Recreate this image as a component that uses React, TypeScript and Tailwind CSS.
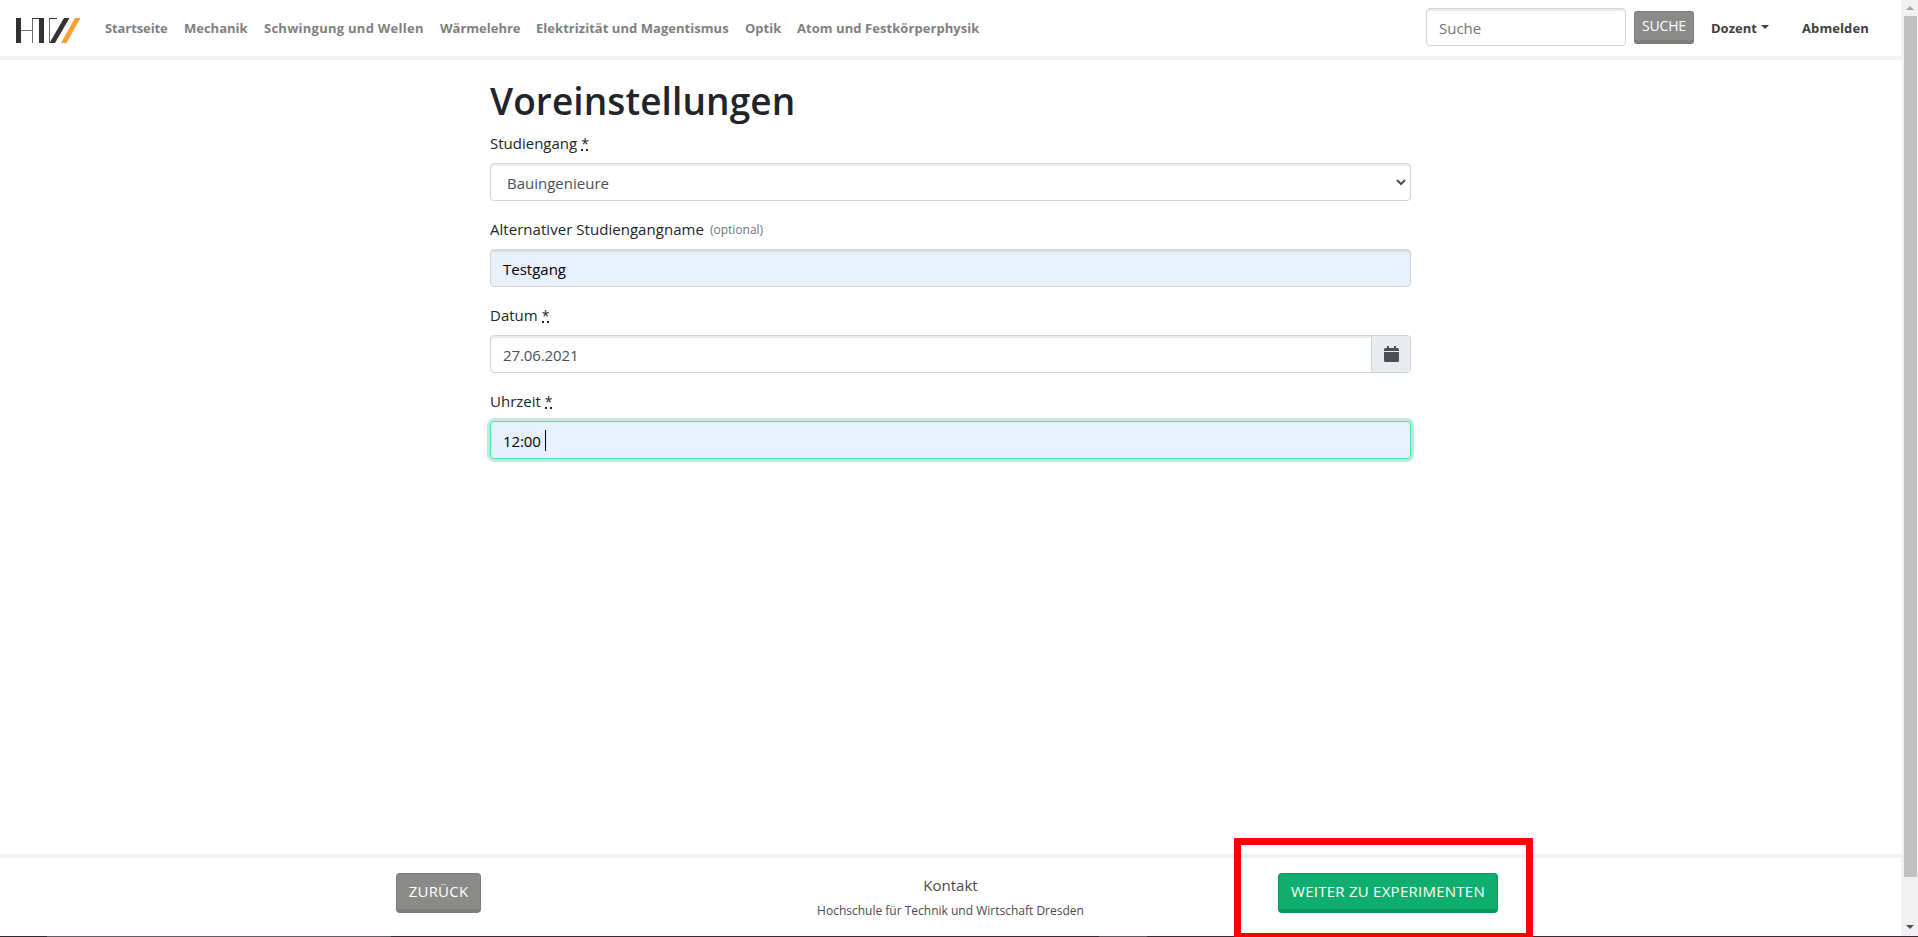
import React from "react";

const nav = [
  { label: "Startseite", cls: "w-[63px] mr-4 tracking-[-0.1px]" },
  { label: "Mechanik", cls: "w-[64px] mr-4" },
  { label: "Schwingung und Wellen", cls: "w-[160px] mr-4 tracking-[0.26px]" },
  { label: "Wärmelehre", cls: "w-[80px] mr-4" },
  { label: "Elektrizität und Magentismus", cls: "w-[193px] mr-4 tracking-[0.04px]" },
  { label: "Optik", cls: "w-[36px] mr-4" },
  { label: "Atom und Festkörperphysik", cls: "w-[183px] tracking-[0.06px]" },
];

function Logo() {
  return (
    <svg width="65" height="25" viewBox="0 0 65 25" className="block shrink-0">
      <g fill="#333132">
        <rect x="0" y="0" width="5" height="25" />
        <rect x="5" y="12" width="11" height="1" opacity=".7" />
        <rect x="16" y="0" width="1" height="25" opacity=".7" />
        <rect x="16" y="0" width="12" height="1" />
        <rect x="23" y="0" width="5" height="25" />
        <rect x="33" y="0" width="8" height="1" />
        <rect x="33" y="0" width="1" height="25" opacity=".7" />
        <path d="M48 0H53.5L39 25H33.5Z" />
      </g>
      <path d="M59 0H64.5L50.5 25H45Z" fill="#f9a030" />
    </svg>
  );
}

function Label({ text, required, optional }: { text: string; required?: boolean; optional?: boolean }) {
  return (
    <label className="-mt-px mb-px flex h-6 items-center whitespace-nowrap text-[15px] leading-6 text-[#212529]">
      <span className={optional ? "tracking-[0.04px]" : ""}>{text}</span>
      {required && (
        <span className="-mt-px ml-1 h-[17px] w-[7px] border-b-2 border-dotted border-[#212529] text-center text-[14px] leading-[20px]">*</span>
      )}
      {optional && <span className="mt-[2px] ml-[6px] text-[12px] text-[#6c757d]">(optional)</span>}
    </label>
  );
}

const field = "flex h-[38px] w-full items-center rounded border border-[#ced4da] text-[15px] whitespace-pre";

export default function App() {
  return (
    <div className="relative flex h-[937px] w-[1918px] flex-col overflow-hidden bg-white font-['Open_Sans','Noto_Sans',sans-serif]">
      <div className="flex h-[936px]">
        <div className="flex w-[1902px] flex-col">
          <header className="flex h-[60px] shrink-0 border-b-4 border-[#f1f1f1]">
            <div className="flex h-14 w-full items-center border-r border-[#f1f1f1] pl-4">
              <div className="mt-[5px]"><Logo /></div>
              <nav className="mt-[2px] ml-6 flex text-[13px] font-bold text-[#7f7f7f]">
                {nav.map((n) => (
                  <a key={n.label} className={`block whitespace-nowrap ${n.cls}`}>{n.label}</a>
                ))}
              </nav>
              <div className="ml-auto flex items-center">
                <div className="mt-[-2px] flex h-[38px] w-[200px] items-center rounded border border-[#ced4da] pt-[2px] pl-3 text-[15px] text-[#6c757d] shadow-[inset_0_2px_0_#ebebeb]">Suche</div>
                <button className="mt-[-2px] ml-2 flex h-[33px] w-[60px] justify-center rounded-[3px] border border-b-4 border-[#7d7d7b] bg-[#8a8a88] text-[14px] leading-[27px] tracking-[-0.2px] text-white">SUCHE</button>
                <span className="mt-[2px] ml-[17px] w-[47px] text-[13px] font-bold text-[#404040]">Dozent</span>
                <span className="-mt-[2px] ml-[3px] h-0 w-0 border-x-4 border-t-4 border-x-transparent border-t-[#404040]" />
                <span className="mt-[2px] mr-[31px] ml-[33px] w-[68px] text-[13px] font-bold tracking-[0.1px] text-[#404040]">Abmelden</span>
              </div>
            </div>
          </header>

          <main className="flex grow flex-col pl-[490px]">
            <div className="flex w-[921px] flex-col pt-4">
              <h1 className="h-[56px] pt-px text-[37px] leading-[48px] font-semibold tracking-[0.1px] text-[#212529]">Voreinstellungen</h1>
              <Label text="Studiengang" required />
              <div className={`${field} mt-[7px] mb-[17px] justify-between pr-1 pl-4 text-[#495057] shadow-[inset_0_2px_0_#ebebeb]`}>
                <span className="pt-[2px]">Bauingenieure</span>
                <svg width="10" height="7" viewBox="0 0 10 7" fill="none" stroke="#495057" strokeWidth="2">
                  <path d="M1 1L5 5L9 1" />
                </svg>
              </div>
              <Label text="Alternativer Studiengangname" optional />
              <div className={`${field} mt-[7px] mb-[17px] bg-[#e8effd] pt-[2px] pl-3 text-black shadow-[inset_0_2px_0_#d5dde9]`}>Testgang</div>
              <Label text="Datum" required />
              <div className={`${field} mt-[7px] mb-[17px] justify-between pl-3 text-[#495057] shadow-[inset_0_2px_0_#ebebeb]`}>
                <span className="pt-[2px] tracking-[-0.1px]">27.06.2021</span>
                <span className="flex h-9 w-[39px] items-center justify-center rounded-r-[3px] border-l border-[#ced4da] bg-[#e9ecef]">
                  <svg width="15" height="16" viewBox="0 0 15 16" fill="#495057">
                    <path d="M3 0h2v2h5V0h2v2h1.5A1.5 1.5 0 0 1 15 3.5V5H0V3.500A1.500 1.500 0 0 1 1.500 2H3ZM0 6h15v8.500a1.500 1.500 0 0 1-1.500 1.500h-12A1.500 1.500 0 0 1 0 14.500Z" />
                  </svg>
                </span>
              </div>
              <Label text="Uhrzeit" required />
              <div className="mt-[7px] flex h-[38px] w-full items-center rounded border border-[#47eba9] bg-[#e8effd] pl-3 text-[15px] text-black shadow-[0_0_0_3px_#c3e9dc]">
                <span className="w-[42px] pt-[2px] tracking-[-0.1px]">12:00</span>
                <span className="h-[21px] w-px bg-black" />
              </div>
            </div>
          </main>

          <footer className="h-[82px] shrink-0 border-t-4 border-[#f1f1f1]">
            <div className="flex h-[78px] border-r border-[#f1f1f1] pt-[15px] pl-[396px]">
              <button className="flex h-10 w-[85px] justify-center rounded border border-b-4 border-[#7d7d7b] bg-[#8a8a88] text-[15px] leading-[34px] tracking-[0.2px] text-white">ZURÜCK</button>
              <div className="flex w-[797px] flex-col items-center pl-[142px] text-[#4a4a4a]">
                <span className="text-[15px] leading-6">Kontakt</span>
                <span className="mt-[2px] text-[12px] leading-6">Hochschule für Technik und Wirtschaft Dresden</span>
              </div>
              <button className="flex h-10 w-[220px] justify-center rounded border border-b-4 border-[#0c965f] bg-[#0fae6e] text-[15px] leading-[34px] tracking-[0.25px] text-white">WEITER ZU EXPERIMENTEN</button>
            </div>
          </footer>
        </div>

        <div className="flex w-4 flex-col items-center justify-between bg-[#f1f1f1]">
          <span className="mt-[6px] h-0 w-0 border-x-4 border-b-4 border-x-transparent border-b-[#a3a3a3]" />
          <span className="mt-[6px] ml-[1px] h-[861px] w-[13px] shrink-0 bg-[#c1c1c1]" />
          <span className="mt-auto mb-[7px] h-0 w-0 border-x-4 border-t-4 border-x-transparent border-t-[#505050]" />
        </div>
      </div>
      <div className="flex h-px bg-[#3a2b33]">
        <span className="w-[47px] bg-[#2c292c]" />
        <span className="w-[344px] bg-[#605d60]" />
        <span className="ml-[708px] w-12 bg-[#60555c]" />
      </div>
      <div className="absolute top-[838px] left-[1234px] h-[102px] w-[299px] rounded-[1px] border-7 border-[#ff0000]" />
    </div>
  );
}
